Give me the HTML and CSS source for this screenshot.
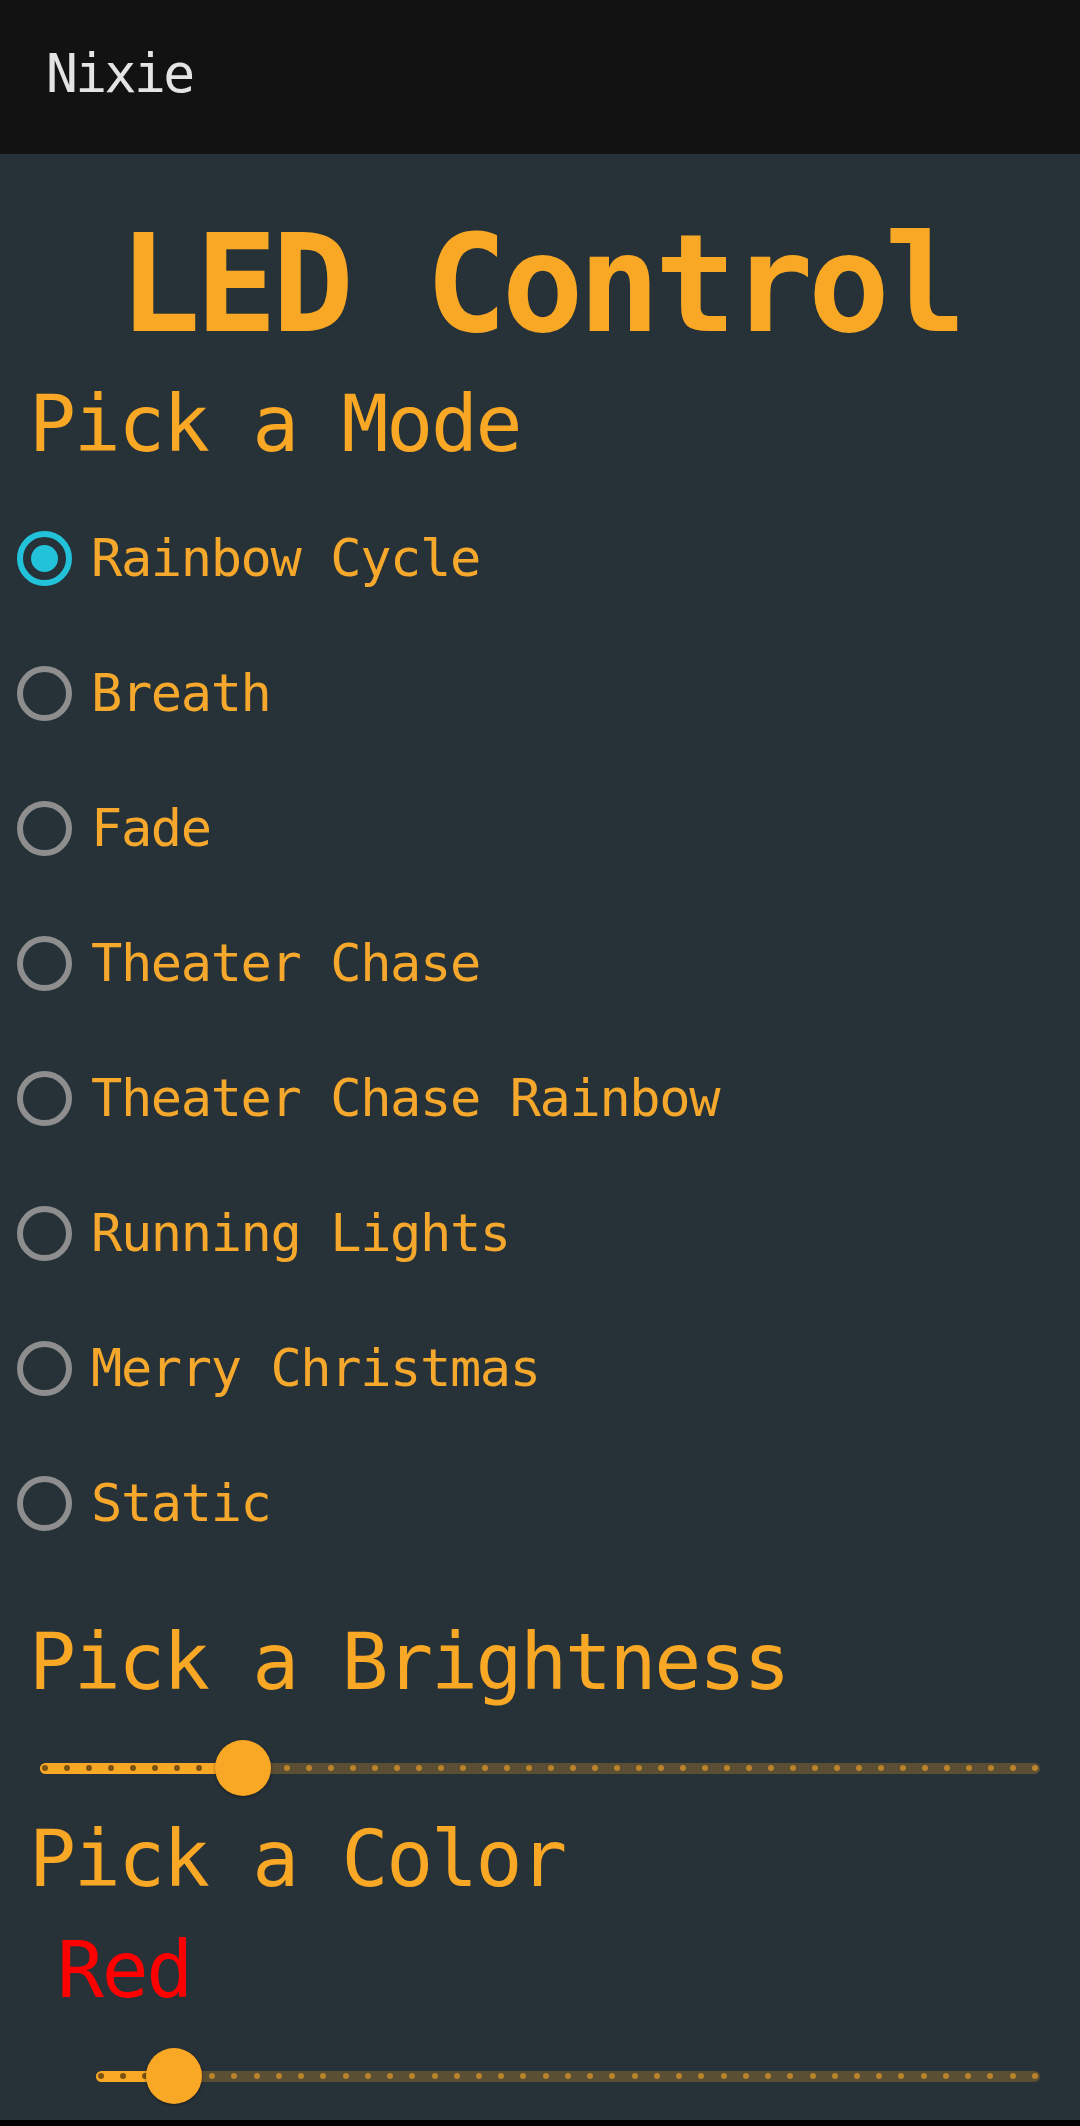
FILE: index.html
```html
<!DOCTYPE html>
<html lang="en">
<head>
<meta charset="utf-8">
<title>Nixie</title>
<link rel="stylesheet" href="styles.css">
</head>
<body>
<header class="appbar"><span class="appbar-title">Nixie</span></header>
<main class="content">
  <h1 class="title">LED Control</h1>
  <h2 class="heading heading-mode">Pick a Mode</h2>
  <div class="radio-list">
    <label class="radio-row"><span class="radio radio-on"><span class="radio-dot"></span></span><span class="radio-label">Rainbow Cycle</span></label>
    <label class="radio-row"><span class="radio"></span><span class="radio-label">Breath</span></label>
    <label class="radio-row"><span class="radio"></span><span class="radio-label">Fade</span></label>
    <label class="radio-row"><span class="radio"></span><span class="radio-label">Theater Chase</span></label>
    <label class="radio-row"><span class="radio"></span><span class="radio-label">Theater Chase Rainbow</span></label>
    <label class="radio-row"><span class="radio"></span><span class="radio-label">Running Lights</span></label>
    <label class="radio-row"><span class="radio"></span><span class="radio-label">Merry Christmas</span></label>
    <label class="radio-row"><span class="radio"></span><span class="radio-label">Static</span></label>
  </div>
  <h2 class="heading heading-bright">Pick a Brightness</h2>
  <div class="slider slider-bright">
    <div class="track">
      <div class="fill" style="width: calc(5px + (100% - 10px) * 0.2)"></div>
      <div class="ticks">
        <i class="tick on"></i><i class="tick on"></i><i class="tick on"></i><i class="tick on"></i><i class="tick on"></i><i class="tick on"></i><i class="tick on"></i><i class="tick on"></i><i class="tick on"></i><i class="tick on"></i>
        <i class="tick"></i><i class="tick"></i><i class="tick"></i><i class="tick"></i><i class="tick"></i><i class="tick"></i><i class="tick"></i><i class="tick"></i><i class="tick"></i><i class="tick"></i>
        <i class="tick"></i><i class="tick"></i><i class="tick"></i><i class="tick"></i><i class="tick"></i><i class="tick"></i><i class="tick"></i><i class="tick"></i><i class="tick"></i><i class="tick"></i>
        <i class="tick"></i><i class="tick"></i><i class="tick"></i><i class="tick"></i><i class="tick"></i><i class="tick"></i><i class="tick"></i><i class="tick"></i><i class="tick"></i><i class="tick"></i>
        <i class="tick"></i><i class="tick"></i><i class="tick"></i><i class="tick"></i><i class="tick"></i><i class="tick"></i>
      </div>
      <div class="thumb" style="left: calc(5px + (100% - 10px) * 0.2)"></div>
    </div>
  </div>
  <h2 class="heading heading-color">Pick a Color</h2>
  <div class="color-name">Red</div>
  <div class="slider slider-color">
    <div class="track">
      <div class="fill" style="width: calc(5px + (100% - 10px) * 0.0785)"></div>
      <div class="ticks">
        <i class="tick on"></i><i class="tick on"></i><i class="tick on"></i><i class="tick on"></i>
        <i class="tick"></i><i class="tick"></i><i class="tick"></i><i class="tick"></i><i class="tick"></i><i class="tick"></i><i class="tick"></i><i class="tick"></i><i class="tick"></i><i class="tick"></i>
        <i class="tick"></i><i class="tick"></i><i class="tick"></i><i class="tick"></i><i class="tick"></i><i class="tick"></i><i class="tick"></i><i class="tick"></i><i class="tick"></i><i class="tick"></i>
        <i class="tick"></i><i class="tick"></i><i class="tick"></i><i class="tick"></i><i class="tick"></i><i class="tick"></i><i class="tick"></i><i class="tick"></i><i class="tick"></i><i class="tick"></i>
        <i class="tick"></i><i class="tick"></i><i class="tick"></i><i class="tick"></i><i class="tick"></i><i class="tick"></i><i class="tick"></i><i class="tick"></i><i class="tick"></i>
      </div>
      <div class="thumb" style="left: calc(5px + (100% - 10px) * 0.0785)"></div>
    </div>
  </div>
</main>
<div class="navbar"></div>
</body>
</html>
```

FILE: styles.css
```css
html, body {
  margin: 0;
  padding: 0;
}

body {
  width: 1080px;
  background: #263238;
  font-family: "DejaVu Sans Mono", "Liberation Mono", monospace;
  color: #f9a825;
}

.appbar {
  height: 154px;
  box-sizing: border-box;
  background: #121212;
  padding: 47px 0 0 46px;
  display: flex;
  align-items: flex-start;
}

.appbar-title {
  font-size: 53px;
  line-height: 53px;
  letter-spacing: -2.6px;
  color: #e4e4e4;
}

.content {
  display: flex;
  flex-direction: column;
  padding-bottom: 16px;
}

.title {
  margin: 61px 0 0 0;
  font-size: 136px;
  line-height: 138.5px;
  font-weight: bold;
  letter-spacing: -5.3px;
  text-align: center;
  color: #f9a825;
}

.heading {
  margin: 0 0 0 29px;
  font-size: 78px;
  line-height: 78px;
  font-weight: normal;
  letter-spacing: -2.3px;
  color: #f9a825;
}

.heading-mode {
  margin-top: 31.5px;
}

.heading-bright {
  margin-top: 52.5px;
}

.heading-color {
  margin-top: 24px;
}

.radio-list {
  margin-top: 27.5px;
  display: flex;
  flex-direction: column;
}

.radio-row {
  height: 135px;
  display: flex;
  align-items: center;
  gap: 19px;
  padding-left: 17px;
}

.radio {
  width: 55px;
  height: 55px;
  box-sizing: border-box;
  border: 6.5px solid #8e8e8e;
  border-radius: 50%;
  display: flex;
  align-items: center;
  justify-content: center;
  flex: none;
}

.radio-on {
  border-color: #22c3da;
}

.radio-dot {
  width: 27px;
  height: 27px;
  border-radius: 50%;
  background: #22c3da;
}

.radio-label {
  font-size: 52px;
  line-height: 52px;
  letter-spacing: -1.4px;
  color: #f5a82c;
}

.color-name {
  margin: 33px 0 0 57px;
  font-size: 78px;
  line-height: 78px;
  letter-spacing: -2.3px;
  color: #ff0000;
}

.slider {
  height: 56px;
  display: flex;
  align-items: center;
  margin-top: 39px;
  margin-right: 40px;
}

.slider-bright {
  margin-left: 40px;
}

.slider-color {
  margin-left: 96px;
}

.track {
  position: relative;
  flex: 1;
  height: 11px;
  border-radius: 5.5px;
  background: #5a4e33;
}

.fill {
  position: absolute;
  left: 0;
  top: 0;
  bottom: 0;
  border-radius: 5.5px 0 0 5.5px;
  background: #f9a825;
}

.ticks {
  position: relative;
  height: 100%;
  box-sizing: border-box;
  padding: 0 2px;
  display: flex;
  align-items: center;
  justify-content: space-between;
}

.tick {
  width: 6px;
  height: 6px;
  border-radius: 50%;
  background: #b9832c;
}

.tick.on {
  background: #7a5312;
}

.thumb {
  position: absolute;
  top: 50%;
  width: 56px;
  height: 56px;
  border-radius: 50%;
  background: #f9a825;
  transform: translate(-50%, -50%);
  box-shadow: 0 1px 3px rgba(0, 0, 0, 0.45);
}

.navbar {
  height: 6px;
  background: #000000;
}
```
